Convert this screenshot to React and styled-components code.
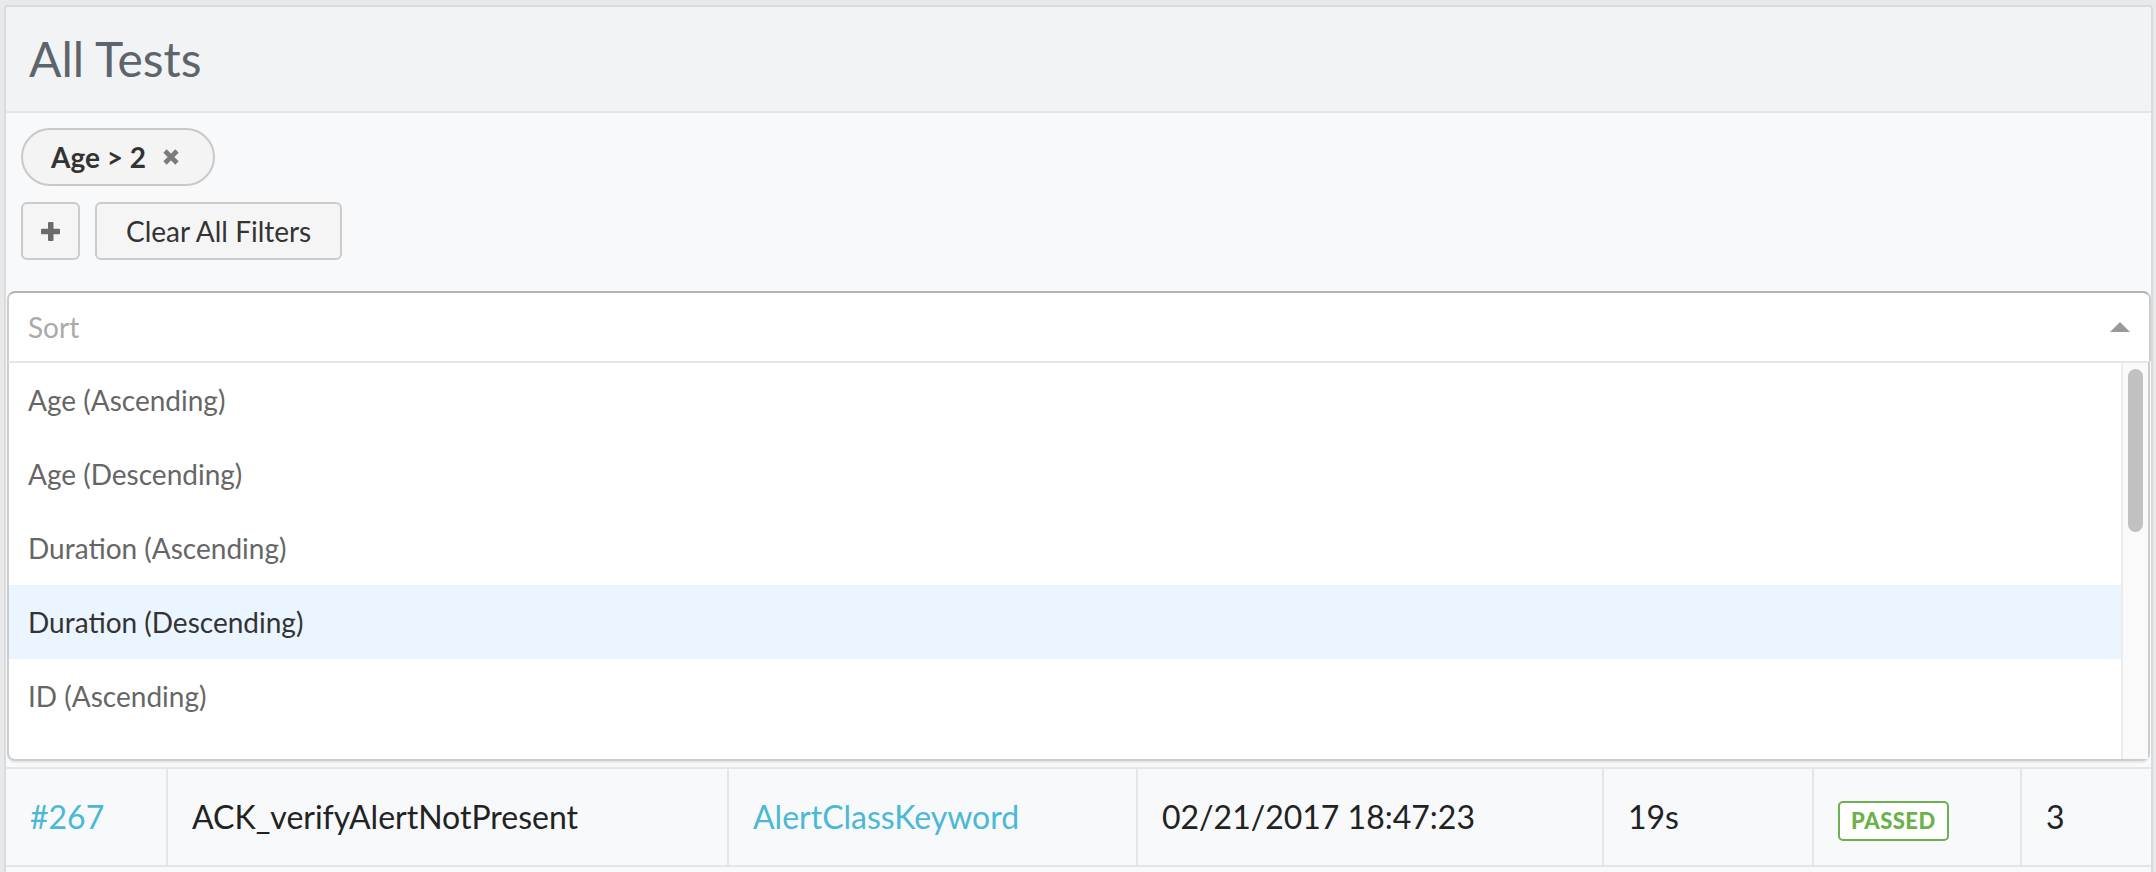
import React from "react";
import styled, { createGlobalStyle } from "styled-components";

const GlobalStyle = createGlobalStyle`
  html, body {
    margin: 0;
    padding: 0;
    overflow: hidden;
    background: #e8e9eb;
  }
  body {
    font-family: Lato, "Open Sans", "Liberation Sans", sans-serif;
  }
  *, *::before, *::after { box-sizing: border-box; }
`;

const Page = styled.div`
  height: 872px;
  overflow: hidden;
  padding: 5px 3px 0 4px;
`;

const Panel = styled.section`
  min-height: 880px;
  background: #f8f9fb;
  border: 2px solid #dadbdd;
  border-radius: 4px;
`;

const Header = styled.header`
  height: 106px;
  display: flex;
  align-items: center;
  padding: 0 23px;
  background: #f2f3f5;
  border-bottom: 2px solid #e4e5e7;
  border-radius: 3px 3px 0 0;
`;

const Title = styled.h1`
  margin: 0;
  font-size: 48px;
  font-weight: 400;
  line-height: 1;
  color: #5d646c;
`;

const FilterSection = styled.div`
  padding: 15px 15px 0;
  display: flex;
  flex-direction: column;
  align-items: flex-start;
  gap: 16px;
`;

const Chip = styled.span`
  display: inline-flex;
  align-items: center;
  gap: 17px;
  height: 58px;
  padding: 0 34px 0 28px;
  border: 2px solid #c9c9c9;
  border-radius: 29px;
  background: #f4f4f4;
  font-size: 28px;
  font-weight: 700;
  color: #333;
`;

const ButtonRow = styled.div`
  display: flex;
  gap: 15px;
`;

const Button = styled.button`
  height: 58px;
  min-width: 59px;
  padding: ${(p) => (p.$icon ? "0" : "0 29px")};
  display: inline-flex;
  align-items: center;
  justify-content: center;
  border: 2px solid #cbcbcb;
  border-radius: 6px;
  background: #f5f5f5;
  font-family: inherit;
  font-size: 28px;
  color: #333;
`;

const SelectWrap = styled.div`
  position: relative;
  z-index: 5;
  margin: 31px 0 0 1px;
`;

const Control = styled.div`
  height: 70px;
  display: flex;
  align-items: center;
  justify-content: space-between;
  padding: 0 19px;
  background: #fff;
  border: 2px solid #ccc;
  border-top-color: #b3b3b3;
  border-bottom: none;
  border-radius: 8px 8px 0 0;
`;

const Placeholder = styled.span`
  font-size: 28px;
  color: #aaa;
`;

const Arrow = styled.span`
  width: 0;
  height: 0;
  border-style: solid;
  border-width: 0 10px 10px;
  border-color: transparent transparent #999;
`;

const Menu = styled.div`
  position: absolute;
  top: 100%;
  left: 0;
  right: 1px;
  height: 400px;
  display: flex;
  background: #fff;
  border: 2px solid #ccc;
  border-top-color: #e6e6e6;
  border-radius: 0 0 8px 8px;
  box-shadow: 0 2px 0 rgba(0, 0, 0, 0.06);
`;

const OptionList = styled.div`
  flex: 1;
  overflow: hidden;
`;

const Option = styled.div`
  height: 74px;
  display: flex;
  align-items: center;
  padding: 0 19px;
  font-size: 28px;
  color: ${(p) => (p.$focused ? "#333" : "#666")};
  background: ${(p) => (p.$focused ? "#ebf5ff" : "#fff")};
`;

const ScrollTrack = styled.div`
  width: 27px;
  flex: none;
  background: #fafafa;
  border-left: 2px solid #ececec;
  padding: 6px 0 0 5px;
`;

const ScrollThumb = styled.div`
  width: 15px;
  height: 163px;
  border-radius: 8px;
  background: #c1c1c1;
`;

const Table = styled.table`
  width: 100%;
  margin-top: 406px;
  table-layout: fixed;
  border-collapse: separate;
  border-spacing: 0;
  border-top: 2px solid #e4e5e7;
`;

const Td = styled.td`
  padding: 24px;
  font-size: 32px;
  line-height: 48px;
  color: #222;
  white-space: nowrap;
  overflow: hidden;
  border-bottom: 2px solid #e4e5e7;
  & + & { border-left: 2px solid #e4e5e7; }
`;

const Link = styled.a`
  color: #4ab8d6;
  text-decoration: none;
`;

const Badge = styled.span`
  display: inline-block;
  vertical-align: middle;
  height: 40px;
  padding: 0 11px;
  border: 2px solid #6db04f;
  border-radius: 5px;
  font-size: 22px;
  line-height: 36px;
  font-weight: 900;
  letter-spacing: 0.5px;
  color: #6cb14c;
  background: #fff;
`;

const TimesIcon = () => (
  <svg width="16" height="16" viewBox="0 0 16 16" aria-hidden="true">
    <path d="M2 2 L14 14 M14 2 L2 14" stroke="#7c7c7c" strokeWidth="4.6" strokeLinecap="butt" />
  </svg>
);

const PlusIcon = () => (
  <svg width="19" height="19" viewBox="0 0 19 19" aria-hidden="true">
    <rect x="7" y="0" width="5.5" height="19" rx="1" fill="#6b6b6b" />
    <rect x="0" y="6.8" width="19" height="5.5" rx="1" fill="#6b6b6b" />
  </svg>
);

const options = [
  "Age (Ascending)",
  "Age (Descending)",
  "Duration (Ascending)",
  "Duration (Descending)",
  "ID (Ascending)",
];

const cols = [160, 561, 409, 466, 210, 208, 131];

const rows = [
  { id: 267, name: "ACK_verifyAlertNotPresent", kw: "AlertClassKeyword", time: "02/21/2017 18:47:23", dur: "19s", age: 3 },
];

export default function App() {
  return (
    <Page>
      <GlobalStyle />
      <Panel>
        <Header>
          <Title>All Tests</Title>
        </Header>
        <FilterSection>
          <Chip>
            Age &gt; 2
            <TimesIcon />
          </Chip>
          <ButtonRow>
            <Button $icon aria-label="Add filter">
              <PlusIcon />
            </Button>
            <Button>Clear All Filters</Button>
          </ButtonRow>
        </FilterSection>
        <SelectWrap>
          <Control>
            <Placeholder>Sort</Placeholder>
            <Arrow />
          </Control>
          <Menu>
            <OptionList>
              {options.map((o) => (
                <Option key={o} $focused={o === "Duration (Descending)"}>
                  {o}
                </Option>
              ))}
            </OptionList>
            <ScrollTrack>
              <ScrollThumb />
            </ScrollTrack>
          </Menu>
        </SelectWrap>
        <Table>
          <colgroup>
            {cols.map((w, i) => (
              <col key={i} style={{ width: w }} />
            ))}
          </colgroup>
          <tbody>
            {rows.map((r) => (
              <tr key={r.id}>
                <Td><Link href="#">#{r.id}</Link></Td>
                <Td>{r.name}</Td>
                <Td><Link href="#">{r.kw}</Link></Td>
                <Td>{r.time}</Td>
                <Td>{r.dur}</Td>
                <Td><Badge>PASSED</Badge></Td>
                <Td>{r.age}</Td>
              </tr>
            ))}
          </tbody>
        </Table>
      </Panel>
    </Page>
  );
}
